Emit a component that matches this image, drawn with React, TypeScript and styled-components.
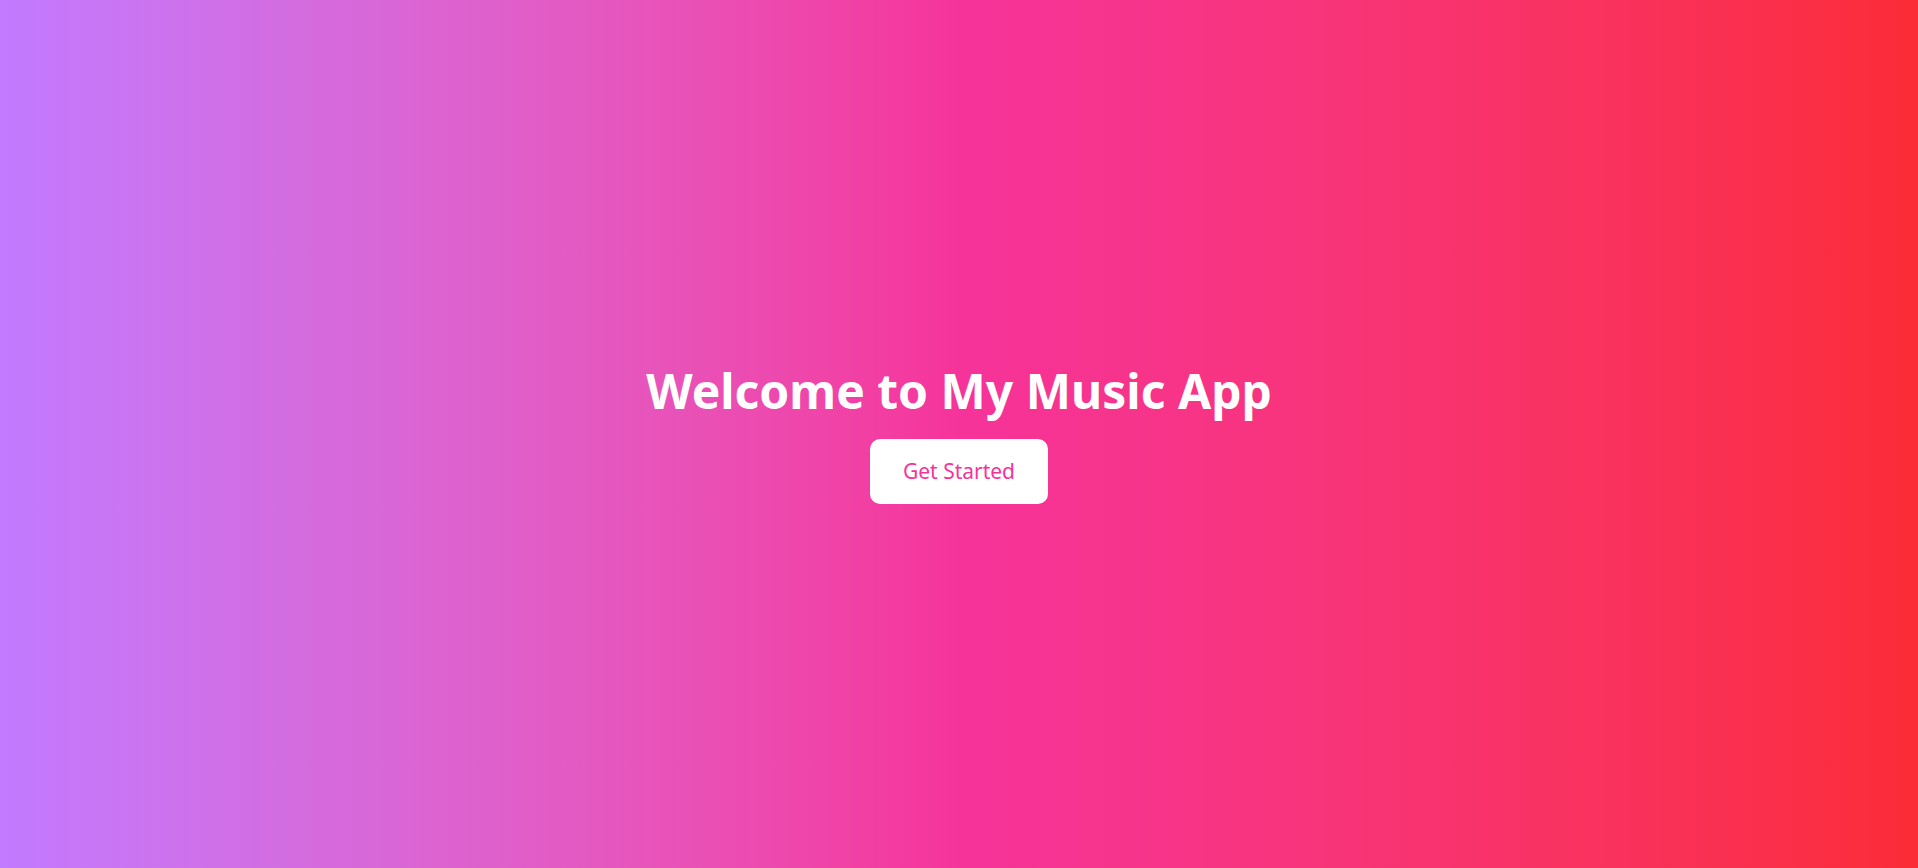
import React from "react";
import styled, { createGlobalStyle } from "styled-components";

const GlobalStyle = createGlobalStyle`
  html, body {
    margin: 0;
    padding: 0;
    height: 100%;
  }
  body {
    font-family: "Noto Sans", "Open Sans", sans-serif;
  }
  #root {
    height: 100%;
  }
`;

const Page = styled.main`
  box-sizing: border-box;
  min-height: 100vh;
  padding-top: 2px;
  display: flex;
  flex-direction: column;
  align-items: center;
  justify-content: center;
  background: linear-gradient(to right in oklab, #c27aff, #f6339a, #fb2c36);
`;

const Title = styled.h1`
  margin: 0 0 24px;
  font-family: "Noto Sans", sans-serif;
  font-size: 48px;
  line-height: 1;
  font-weight: 700;
  color: #ffffff;
`;

const StartButton = styled.button`
  border: none;
  background: #ffffff;
  color: #f6339a;
  font-family: "Noto Sans", sans-serif;
  font-size: 21px;
  line-height: 28px;
  padding: 18px 33px 19px;
  border-radius: 10px;
  cursor: pointer;
`;

export default function App() {
  return (
    <>
      <GlobalStyle />
      <Page>
        <Title>Welcome to My Music App</Title>
        <StartButton>Get Started</StartButton>
      </Page>
    </>
  );
}
